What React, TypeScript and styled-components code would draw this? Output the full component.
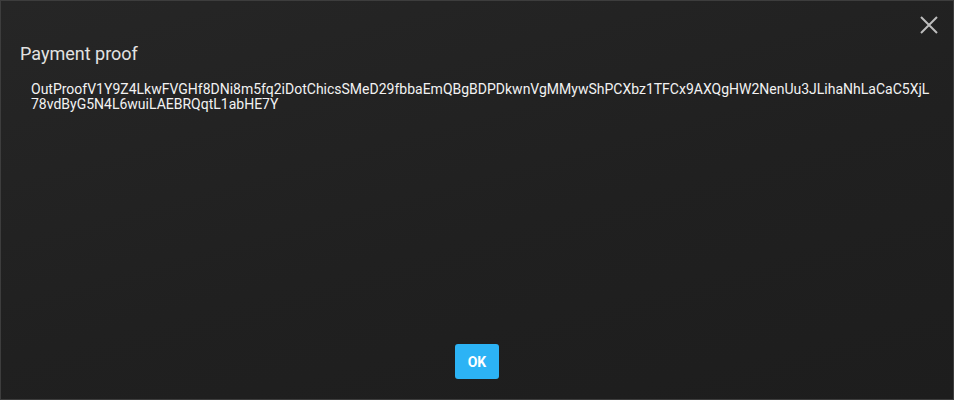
import React from "react";
import styled, { createGlobalStyle } from "styled-components";

const Global = createGlobalStyle`
  html, body { margin: 0; padding: 0; background: #1e1e1e; }
  body { font-family: Roboto, "Liberation Sans", sans-serif; }
`;

const Dialog = styled.div`
  box-sizing: border-box;
  width: 954px;
  height: 400px;
  border: 1px solid #3d3d3d;
  background: linear-gradient(165deg, #262626 0%, #202020 55%, #1d1d1d 100%);
  display: flex;
  flex-direction: column;
  position: relative;
`;

const CloseButton = styled.button`
  position: absolute;
  top: 12px;
  right: 12px;
  width: 24px;
  height: 24px;
  padding: 0;
  border: none;
  background: transparent;
  display: flex;
  align-items: center;
  justify-content: center;
  cursor: pointer;
`;

const Title = styled.h2`
  margin: 0;
  padding: 41px 19px 0;
  font-size: 18px;
  font-weight: 400;
  line-height: 24px;
  color: #e2e2e2;
`;

const Content = styled.div`
  flex: 1;
  padding: 16px 22px 0 30px;
  font-size: 14px;
  line-height: 15px;
  color: #f2f2f2;
  word-break: break-all;
`;

const Actions = styled.div`
  display: flex;
  justify-content: center;
  padding-bottom: 20px;
`;

const OkButton = styled.button`
  width: 44px;
  height: 35px;
  border: none;
  border-radius: 3px;
  background: #2cb3f5;
  color: #fff;
  font-family: Roboto, "Liberation Sans", sans-serif;
  font-weight: 700;
  font-size: 14px;
  cursor: pointer;
`;

const proof =
  "OutProofV1Y9Z4LkwFVGHf8DNi8m5fq2iDotChicsSMeD29fbbaEmQBgBDPDkwnVgMMywShPCXbz1TFCx9AXQgHW2NenUu3JLihaNhLaCaC5XjL78vdByG5N4L6wuiLAEBRQqtL1abHE7Y";

export default function App() {
  return (
    <>
      <Global />
      <Dialog>
        <CloseButton aria-label="Close">
          <svg width="18" height="18" viewBox="0 0 18 18">
            <path d="M1 1L17 17M17 1L1 17" stroke="#bdbdbd" strokeWidth="2" />
          </svg>
        </CloseButton>
        <Title>Payment proof</Title>
        <Content>{proof}</Content>
        <Actions>
          <OkButton>OK</OkButton>
        </Actions>
      </Dialog>
    </>
  );
}
